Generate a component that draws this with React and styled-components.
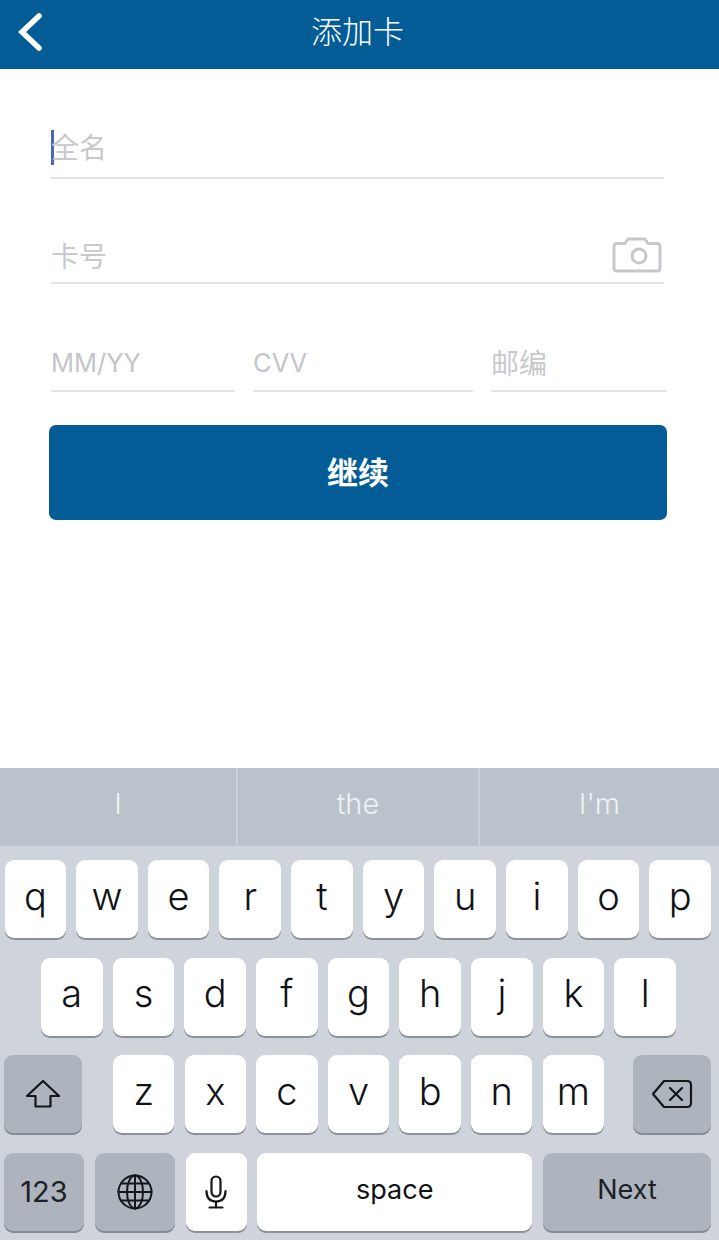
import React from "react";
import styled, { createGlobalStyle } from "styled-components";

const Global = createGlobalStyle`
  html, body { margin: 0; padding: 0; background: #fff; }
  * { box-sizing: border-box; }
`;
const cjk = `"Noto Sans CJK SC", "Noto Sans", sans-serif`;
const latin = `Inter, "Liberation Sans", sans-serif`;

const Page = styled.div`
  width: 719px; height: 1240px; overflow: hidden;
  display: flex; flex-direction: column; background: #fff;
`;
const Header = styled.header`
  height: 69px; flex: none; background: #045c97; position: relative;
  display: flex; align-items: center; justify-content: center;
`;
const BackIcon = styled.svg`
  position: absolute; left: 16px; top: 12px; width: 28px; height: 40px;
`;
const Title = styled.h1`
  margin: 0 4px 10px 0; font: 300 31px/1 ${cjk}; color: #fff;
`;
const Form = styled.main`
  flex: 1; padding: 0 0 0 51px; display: flex; flex-direction: column;
`;
const Field = styled.div`
  height: ${p => p.$h}px;
  width: ${p => p.$w ? p.$w + "px" : "auto"};
  border-bottom: 2px solid #e3e3e6;
  display: flex; align-items: flex-end; justify-content: space-between;
  padding-bottom: ${p => p.$pb}px;
`;
const Placeholder = styled.span`
  display: block;
  font: 400 ${p => p.$latin ? 25.5 : 28}px/1 ${p => p.$latin ? latin : cjk};
  color: ${p => p.$latin ? "#c4c4ca" : "#c8c8cd"};
`;
const NameLine = styled.span`
  display: flex; align-items: center;
`;
const Caret = styled.span`
  flex: none; width: 3px; height: 35px; background: #4a69bd; margin: 4px -3px 0 0;
`;
const CameraIcon = styled.svg`
  width: 50px; height: 36px; margin: 0 2px -4px 0; flex: none;
`;
const TripleRow = styled.div`
  display: grid; grid-template-columns: 184px 220px 176px; column-gap: 18px; width: 616px;
`;
const Continue = styled.button`
  width: 618px; height: 95px; margin: 33px 0 0 -2px; border: 0; border-radius: 7px; padding: 0 0 5px;
  background: #045c97; color: #fff; font: 700 31px/1 ${cjk};
`;
const Keyboard = styled.section`
  height: 472px; flex: none; background: #cfd3dc;
  display: flex; flex-direction: column;
`;
const Suggestions = styled.div`
  height: 78px; flex: none; background: #bac2cc;
  display: grid; grid-template-columns: 236px 242px 241px;
`;
const Suggestion = styled.div`
  display: flex; align-items: center; justify-content: center; padding-bottom: 7px;
  font: 300 29px/1 ${latin}; color: #eef1f4;
  & + & { border-left: 2px solid #ccd2da; }
`;
const Rows = styled.div`
  padding-top: 14px; display: flex; flex-direction: column; gap: 19.7px;
`;
const KeyRow = styled.div`
  display: grid; height: 78px; column-gap: ${p => p.$gap}px;
  grid-template-columns: ${p => p.$cols};
  padding: ${p => p.$pad};
`;
const LetterGroup = styled.div`
  display: grid; grid-template-columns: repeat(7, 1fr); column-gap: 10.1px; margin: 0 -1px 0 1px;
`;
const Key = styled.div`
  display: flex; align-items: center; justify-content: center;
  border-radius: 9px; height: 78px;
  background: ${p => p.$fn ? "#adb4be" : "#fff"};
  box-shadow: 0 2px 0 ${p => p.$fn ? "#868a92" : "#8e9197"};
  color: ${p => p.$fn ? "#1c1f24" : "#111216"}; font: ${p => p.$size ? 400 : 300} ${p => p.$size || 38}px/1 ${latin};
  padding-bottom: ${p => p.$pb ?? 7}px;
`;
const KeyIcon = styled.svg`
  fill: none; stroke: #14161a; stroke-width: ${p => p.$sw || 2.2}; stroke-linejoin: round; stroke-linecap: round;
`;

const letters = s => s.split("").map(c => <Key key={c}>{c}</Key>);

export default function App() {
  return (
    <Page>
      <Global />
      <Header>
        <BackIcon viewBox="0 0 28 40">
          <path d="M23 4 L6 20 L23 36" fill="none" stroke="#fff" strokeWidth="5.5" strokeLinecap="round" strokeLinejoin="miter" />
        </BackIcon>
        <Title>添加卡</Title>
      </Header>
      <Form>
        <Field $h={110} $w={613} $pb={12}>
          <NameLine><Caret /><Placeholder>全名</Placeholder></NameLine>
        </Field>
        <Field $h={105} $w={613} $pb={13}>
          <Placeholder>卡号</Placeholder>
          <CameraIcon viewBox="0 0 50 36">
            <path d="M5 6.5 H13 L16 2 H33 L36 6.5 H45 Q48 6.5 48 9.5 V31 Q48 34 45 34 H5 Q2 34 2 31 V9.5 Q2 6.5 5 6.5 Z" fill="none" stroke="#c8c8cc" strokeWidth="3" strokeLinejoin="round" />
            <circle cx="27" cy="19" r="7" fill="none" stroke="#c8c8cc" strokeWidth="3" />
          </CameraIcon>
        </Field>
        <TripleRow>
          <Field $h={108} $pb={15}><Placeholder $latin>MM/YY</Placeholder></Field>
          <Field $h={108} $pb={15}><Placeholder $latin>CVV</Placeholder></Field>
          <Field $h={108} $pb={14}><Placeholder>邮编</Placeholder></Field>
        </TripleRow>
        <Continue>继续</Continue>
      </Form>
      <Keyboard>
        <Suggestions>
          <Suggestion>I</Suggestion>
          <Suggestion>the</Suggestion>
          <Suggestion>I'm</Suggestion>
        </Suggestions>
        <Rows>
          <KeyRow $cols="repeat(10, 1fr)" $gap={10} $pad="0 8px 0 4.5px">{letters("qwertyuiop")}</KeyRow>
          <KeyRow $cols="repeat(9, 1fr)" $gap={10.1} $pad="0 43px 0 41px">{letters("asdfghjkl")}</KeyRow>
          <KeyRow $cols="78px 1fr 78px" $gap={30} $pad="0 8px 0 4px">
            <Key $fn $pb={0}>
              <KeyIcon width="36" height="30" viewBox="0 0 36 30">
                <path d="M18 2 L34 17 H25.5 V27.5 H10.5 V17 H2 Z" />
              </KeyIcon>
            </Key>
            <LetterGroup>{letters("zxcvbnm")}</LetterGroup>
            <Key $fn $pb={0}>
              <KeyIcon width="42" height="30" viewBox="0 0 42 30">
                <path d="M13 2 H36 Q40 2 40 6 V24 Q40 28 36 28 H13 L2 15 Z" />
                <path d="M19 9 L31 21 M31 9 L19 21" />
              </KeyIcon>
            </Key>
          </KeyRow>
          <KeyRow $cols="80px 80px 61px 275px 168px" $gap={10.75} $pad="0 8px 0 4px">
            <Key $fn $size={29} $pb={2}>123</Key>
            <Key $fn $pb={0}>
              <KeyIcon width="36" height="36" viewBox="0 0 36 36" $sw={2}>
                <circle cx="18" cy="18" r="16.5" />
                <ellipse cx="18" cy="18" rx="8" ry="16.5" />
                <path d="M18 1.5 V34.5 M1.5 18 H34.5 M4.5 9.5 H31.5 M4.5 26.5 H31.5" />
              </KeyIcon>
            </Key>
            <Key $pb={0}>
              <KeyIcon width="22" height="34" viewBox="0 0 22 34">
                <rect x="6.5" y="1.5" width="9" height="20" rx="4.5" />
                <path d="M1.5 16 Q1.5 26.5 11 26.5 Q20.5 26.5 20.5 16 M11 26.5 V32.5 M4.5 32.5 H17.5" />
              </KeyIcon>
            </Key>
            <Key $size={27} $pb={5}>space</Key>
            <Key $fn $size={27} $pb={6}>Next</Key>
          </KeyRow>
        </Rows>
      </Keyboard>
    </Page>
  );
}
